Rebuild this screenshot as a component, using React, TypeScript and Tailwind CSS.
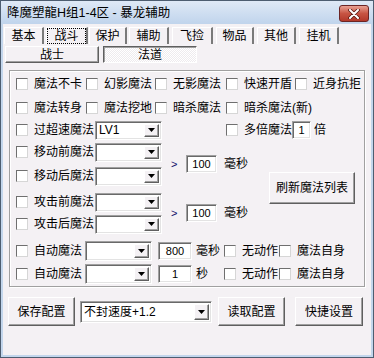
import React from "react";

const raised =
  "bg-[#f4f1f4] border border-t-white border-l-white border-r-[#5f5f5f] border-b-[#5f5f5f] shadow-[inset_-1px_-1px_0_#a0a0a0]";
const sunken =
  "bg-white border border-t-[#a0a0a0] border-l-[#a0a0a0] border-r-white border-b-white shadow-[inset_1px_1px_0_#696969,inset_-1px_-1px_0_#e3e3e3]";

const Check = () => (
  <span className="inline-block w-[12px] h-[12px] shrink-0 bg-white border border-t-[#6f6f6f] border-l-[#6f6f6f] border-r-[#d6d6d6] border-b-[#d6d6d6]" />
);

type ItemProps = { label: string; w?: string };
const CheckItem = ({ label, w = "" }: ItemProps) => (
  <div className={`flex items-center shrink-0 ${w}`}>
    <Check />
    <span className="ml-[6px] whitespace-nowrap">{label}</span>
  </div>
);

const Arrow = () => (
  <svg width="7" height="4" viewBox="0 0 7 4">
    <polygon points="0,0 7,0 3.5,4" fill="#000" />
  </svg>
);

type ComboProps = { value?: string; w: string; h?: string };
const Combo = ({ value = "", w, h = "h-[19px]" }: ComboProps) => (
  <div className={`flex items-center shrink-0 ${w} ${h} ${sunken} p-[2px]`}>
    <span className="flex-1 pl-[1px] text-[12px] leading-none whitespace-nowrap overflow-hidden">
      {value}
    </span>
    <div className={`flex items-center justify-center w-[15px] h-full ${raised}`}>
      <Arrow />
    </div>
  </div>
);

const Field = ({ value, w }: { value: string; w: string }) => (
  <div
    className={`flex items-center justify-center shrink-0 h-[18px] ${w} ${sunken} text-[11px] leading-none`}
  >
    {value}
  </div>
);

const tabs = [
  { t: "基本", c: "ml-[1px] w-[40px]" },
  { t: "战斗", c: "ml-[2px] w-[42px]", sel: true },
  { t: "保护", c: "ml-[1px] w-[38px]" },
  { t: "辅助", c: "ml-[2px] w-[40px]" },
  { t: "飞捡", c: "ml-[3px] w-[41px]" },
  { t: "物品", c: "ml-[3px] w-[38px]" },
  { t: "其他", c: "ml-[3px] w-[39px]" },
  { t: "挂机", c: "ml-[3px] w-[40px]" },
];

const Gt = () => <span className="w-[15px] shrink-0 text-[11px] text-[#10106a]">&gt;</span>;

export default function App() {
  return (
    <div className="w-[374px] h-[358px] flex flex-col bg-[#c3d6ec] border border-[#4d5d70] font-['Liberation_Sans','Noto_Sans_CJK_SC',sans-serif] text-[12px] leading-none text-black">
      {/* title bar */}
      <div className="h-[23px] shrink-0 flex items-center justify-between pl-[6px] pr-[4px] bg-gradient-to-b from-[#dfe9f6] to-[#c0d4ec]">
        <span className="text-[12.5px] mt-[2px]">降魔塑龍H组1-4区 - 暴龙辅助</span>
        <div className="mt-[2px] w-[30px] h-[17px] rounded-[3px] border border-[#6b2424] bg-gradient-to-b from-[#e8a093] via-[#c75443] to-[#b3382a] flex items-center justify-center">
          <svg width="12" height="10" viewBox="0 0 12 10">
            <path d="M2 1 L10 9 M10 1 L2 9" stroke="#5a1a12" strokeWidth="3.6" strokeLinecap="round" />
            <path d="M2 1 L10 9 M10 1 L2 9" stroke="#fff" strokeWidth="2" strokeLinecap="round" />
          </svg>
        </div>
      </div>

      {/* client */}
      <div className="flex-1 mx-[2px] mb-[2px] bg-[#f4f1f4] flex flex-col pt-[3px]">
        <div className="flex h-[17px]">
          {tabs.map((tab) => (
            <div
              key={tab.t}
              className={`${tab.c} flex items-center justify-center shrink-0 border-t border-l border-t-white border-l-white border-r-2 border-r-[#7a7a7a]`}
            >
              {tab.sel ? (
                <span className="w-full h-full flex items-center justify-center border border-dotted border-black">
                  {tab.t}
                </span>
              ) : (
                tab.t
              )}
            </div>
          ))}
        </div>

        <div className="flex h-[17px] mt-[2px] ml-[2px]">
          <div className={`w-[94px] flex items-center justify-center ${raised}`}>战士</div>
          <div className="w-[94px] ml-[4px] flex items-center justify-center border border-t-[#5f5f5f] border-l-[#5f5f5f] border-r-white border-b-white shadow-[inset_1px_1px_0_#a0a0a0] bg-[repeating-conic-gradient(#ffffff_0%_25%,#eeebee_0%_50%)] bg-[length:2px_2px]">
            法道
          </div>
        </div>

        {/* group */}
        <div className="w-[356px] h-[217px] ml-[6px] mt-[7px] border border-[#a0a0a0] shadow-[inset_1px_1px_0_#fff,1px_1px_0_#fff] flex flex-col pl-[6px] pt-[2px]">
          <div className="flex h-[22px] items-center">
            <CheckItem label="魔法不卡" w="w-[70px]" />
            <CheckItem label="幻影魔法" w="w-[69px]" />
            <CheckItem label="无影魔法" w="w-[71px]" />
            <CheckItem label="快速开盾" w="w-[69px]" />
            <CheckItem label="近身抗拒" />
          </div>
          <div className="flex h-[22px] mt-[2px] items-center">
            <CheckItem label="魔法转身" w="w-[70px]" />
            <CheckItem label="魔法挖地" w="w-[69px]" />
            <CheckItem label="暗杀魔法" w="w-[71px]" />
            <CheckItem label="暗杀魔法(新)" />
          </div>
          <div className="flex h-[22px] items-center">
            <CheckItem label="过超速魔法" w="w-[79px]" />
            <Combo value="LV1" w="w-[67px]" />
            <div className="w-[64px] shrink-0" />
            <CheckItem label="多倍魔法" w="w-[66px]" />
            <Field value="1" w="w-[19px]" />
            <span className="ml-[3px]">倍</span>
          </div>

          <div className="flex">
            <div className="flex flex-col w-[146px] shrink-0">
              <div className="flex h-[22px] items-center">
                <CheckItem label="移动前魔法" w="w-[79px]" />
                <Combo w="w-[67px]" />
              </div>
              <div className="flex h-[22px] mt-[2px] items-center">
                <CheckItem label="移动后魔法" w="w-[79px]" />
                <Combo w="w-[67px]" />
              </div>
              <div className="flex h-[22px] mt-[4px] items-center">
                <CheckItem label="攻击前魔法" w="w-[79px]" />
                <Combo w="w-[67px]" />
              </div>
              <div className="flex h-[22px] items-center">
                <CheckItem label="攻击后魔法" w="w-[79px]" />
                <Combo w="w-[67px]" />
              </div>
            </div>
            <div className="flex flex-col w-[107px] pl-[9px] shrink-0">
              <div className="flex h-[46px] items-center">
                <Gt />
                <Field value="100" w="w-[31px]" />
                <span className="ml-[7px]">毫秒</span>
              </div>
              <div className="flex h-[44px] mt-[4px] items-center">
                <Gt />
                <Field value="100" w="w-[31px]" />
                <span className="ml-[7px]">毫秒</span>
              </div>
            </div>
            <div className="flex items-center">
              <div className={`w-[86px] h-[32px] flex items-center justify-center ${raised}`}>刷新魔法列表</div>
            </div>
          </div>

          <div className="flex h-[22px] mt-[5px] items-center">
            <CheckItem label="自动魔法" w="w-[69px]" />
            <Combo w="w-[67px]" h="h-[20px]" />
            <div className="ml-[6px]">
              <Field value="800" w="w-[34px]" />
            </div>
            <span className="ml-[4px] w-[28px] shrink-0">毫秒</span>
            <CheckItem label="无动作" w="w-[55px]" />
            <CheckItem label="魔法自身" />
          </div>
          <div className="flex h-[22px] mt-[1px] items-center">
            <CheckItem label="自动魔法" w="w-[69px]" />
            <Combo w="w-[67px]" h="h-[20px]" />
            <div className="ml-[6px]">
              <Field value="1" w="w-[34px]" />
            </div>
            <span className="ml-[4px] w-[28px] shrink-0">秒</span>
            <CheckItem label="无动作" w="w-[55px]" />
            <CheckItem label="魔法自身" />
          </div>
        </div>

        {/* bottom buttons */}
        <div className="flex items-center h-[29px] mt-[10px] ml-[5px]">
          <div className={`w-[67px] h-full flex items-center justify-center ${raised}`}>保存配置</div>
          <div className="ml-[5px]">
            <Combo value="不封速度+1.2" w="w-[132px]" h="h-[22px]" />
          </div>
          <div className={`ml-[6px] w-[67px] h-full flex items-center justify-center ${raised}`}>读取配置</div>
          <div className={`ml-[10px] w-[68px] h-full flex items-center justify-center ${raised}`}>快捷设置</div>
        </div>
      </div>
    </div>
  );
}
